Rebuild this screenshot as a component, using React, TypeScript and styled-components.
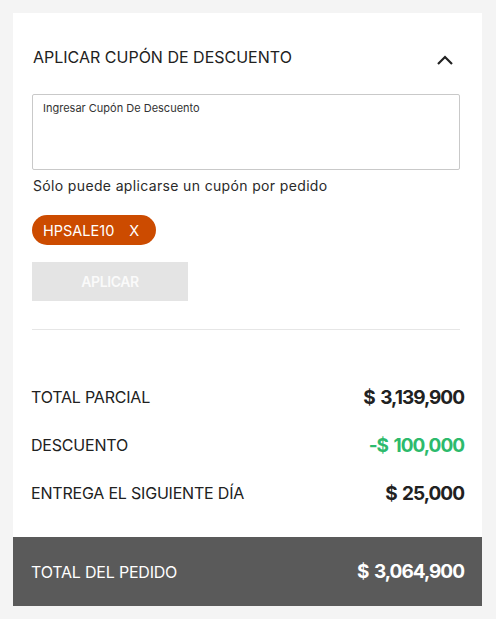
import styled, { createGlobalStyle } from "styled-components";

const GlobalStyle = createGlobalStyle`
    html, body {
        margin: 0;
        padding: 0;
        background: #f4f4f4;
        font-family: Inter, "Liberation Sans", Arial, sans-serif;
        color: #212121;
    }
`;

const Page = styled.div`
    padding: 13px 14px 13px 13px;
`;

const Card = styled.div`
    background: #ffffff;
    width: 469px;
`;

const CouponSection = styled.div`
    padding: 34px 36px 0 19px;
`;

const Header = styled.div`
    display: flex;
    justify-content: space-between;
    align-items: center;
    padding-left: 1px;
`;

const Title = styled.h2`
    margin: 0;
    font-size: 16px;
    font-weight: 400;
    color: #212121;
`;

const Chevron = styled.svg`
    width: 18px;
    height: 12px;
    margin-right: -8px;
    margin-top: 6px;
`;

const CouponInput = styled.textarea`
    display: block;
    box-sizing: border-box;
    width: 428px;
    height: 76px;
    margin-top: 27px;
    padding: 6px 10px;
    border: 1px solid #c9c9c9;
    border-radius: 2px;
    resize: none;
    font-family: Inter, "Liberation Sans", Arial, sans-serif;
    font-size: 11px;
    &::placeholder {
        color: #333333;
    }
`;

const Note = styled.p`
    margin: 7px 0 0 1px;
    font-size: 14px;
    color: #2a2a2a;
    letter-spacing: 0.35px;
`;

const Chip = styled.div`
    display: inline-flex;
    align-items: center;
    gap: 15px;
    margin-top: 21px;
    height: 30px;
    padding: 0 17px 0 11px;
    border-radius: 15px;
    background: #cc4b00;
    color: #ffffff;
    font-size: 14.5px;
`;

const ApplyButton = styled.button`
    display: block;
    width: 156px;
    height: 39px;
    margin-top: 17px;
    border: none;
    background: #e4e4e4;
    color: #fafafa;
    font-family: Inter, "Liberation Sans", Arial, sans-serif;
    font-size: 14px;
    font-weight: 600;
    letter-spacing: -0.4px;
`;

const Divider = styled.hr`
    margin: 28px 0 0 0;
    width: 428px;
    border: none;
    border-top: 1px solid #e6e6e6;
`;

const Totals = styled.div`
    display: flex;
    flex-direction: column;
    padding: 43px 18px 20px 18px;
`;

const Row = styled.div`
    display: flex;
    justify-content: space-between;
    align-items: center;
    height: 48px;
`;

const Label = styled.span<{ $light?: boolean }>`
    font-size: 16px;
    letter-spacing: -0.2px;
    color: ${(p) => (p.$light ? "#ffffff" : "#212121")};
`;

const Amount = styled.span<{ $tone?: "green" | "light" }>`
    font-size: 19px;
    font-weight: 700;
    letter-spacing: -1px;
    word-spacing: 2px;
    color: ${(p) =>
        p.$tone === "green" ? "#2dba6c" : p.$tone === "light" ? "#ffffff" : "#212121"};
`;

const OrderTotal = styled.div`
    display: flex;
    justify-content: space-between;
    align-items: center;
    height: 69px;
    padding: 0 18px;
    background: #5a5a5a;
`;

export default function App() {
    return (
        <Page>
            <GlobalStyle />
            <Card>
                <CouponSection>
                    <Header>
                        <Title>APLICAR CUPÓN DE DESCUENTO</Title>
                        <Chevron viewBox="0 0 18 12">
                            <path d="M2 10 L9 3 L16 10" fill="none" stroke="#222" strokeWidth="2.2" />
                        </Chevron>
                    </Header>
                    <CouponInput placeholder="Ingresar Cupón De Descuento" />
                    <Note>Sólo puede aplicarse un cupón por pedido</Note>
                    <Chip>
                        <span>HPSALE10</span>
                        <span>X</span>
                    </Chip>
                    <ApplyButton>APLICAR</ApplyButton>
                    <Divider />
                </CouponSection>
                <Totals>
                    <Row>
                        <Label>TOTAL PARCIAL</Label>
                        <Amount>$ 3,139,900</Amount>
                    </Row>
                    <Row>
                        <Label>DESCUENTO</Label>
                        <Amount $tone="green">-$ 100,000</Amount>
                    </Row>
                    <Row>
                        <Label>ENTREGA EL SIGUIENTE DÍA</Label>
                        <Amount>$ 25,000</Amount>
                    </Row>
                </Totals>
                <OrderTotal>
                    <Label $light>TOTAL DEL PEDIDO</Label>
                    <Amount $tone="light">$ 3,064,900</Amount>
                </OrderTotal>
            </Card>
        </Page>
    );
}
